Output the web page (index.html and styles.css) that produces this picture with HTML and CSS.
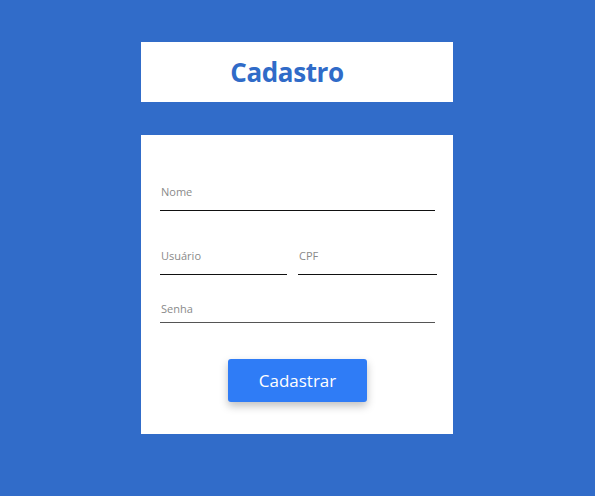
FILE: index.html
```html
<!DOCTYPE html>
<html lang="pt-BR">
<head>
    <meta charset="UTF-8">
    <meta name="viewport" content="width=device-width, initial-scale=1.0">
    <title>Cadastro</title>
    <link rel="stylesheet" href="styles.css">
</head>
<body>
    <div class="wrap">
        <div class="header">
            <h1>Cadastro</h1>
        </div>

        <form class="card">
            <div class="field field-nome">
                <label for="nome">Nome</label>
                <input type="text" id="nome">
            </div>
            <div class="row">
                <div class="field field-usuario">
                    <label for="usuario">Usuário</label>
                    <input type="text" id="usuario">
                </div>
                <div class="field field-cpf">
                    <label for="cpf">CPF</label>
                    <input type="text" id="cpf">
                </div>
            </div>
            <div class="field field-senha">
                <label for="senha">Senha</label>
                <input type="password" id="senha">
            </div>
            <div class="actions">
                <button type="button">Cadastrar</button>
            </div>
        </form>
    </div>
</body>
</html>
```

FILE: styles.css
```css
body {
    margin: 0;
    background-color: #316cc9;
    font-family: "Open Sans", "Noto Sans", sans-serif;
}
.wrap {
    width: 312px;
    margin: 42px 0 0 141px;
    display: flex;
    flex-direction: column;
    gap: 33px;
}
.header {
    height: 60px;
    background: #fff;
    display: flex;
    align-items: center;
    justify-content: center;
    padding-right: 20px;
}
.header h1 {
    margin: 0;
    font-size: 26px;
    font-weight: 700;
    color: #306bc8;
    letter-spacing: -0.4px;
}
.card {
    height: 299px;
    box-sizing: border-box;
    background: #fff;
    padding: 49px 16px 0 19px;
    display: flex;
    flex-direction: column;
}
.field {
    display: flex;
    flex-direction: column;
}
.field label {
    font-size: 11px;
    line-height: 16px;
    color: #8a8a8a;
    padding-left: 1px;
}
.field input {
    border: none;
    border-bottom: 1px solid #111;
    outline: none;
    height: 10px;
    padding: 0;
    font: inherit;
}
.field-nome {
    width: 275px;
}
.row {
    display: flex;
    gap: 11px;
    margin-top: 37px;
}
.field-usuario {
    width: 127px;
}
.field-cpf {
    width: 139px;
}
.field-senha {
    width: 275px;
    margin-top: 26px;
}
.field-senha input {
    height: 5px;
    border-bottom-color: #555;
}
.actions {
    display: flex;
    justify-content: center;
    margin-top: 36px;
    padding-right: 2px;
}
.actions button {
    width: 139px;
    height: 43px;
    background-color: #2f7cf6;
    color: #fff;
    border: none;
    border-radius: 3px;
    font-family: inherit;
    font-size: 17px;
    box-shadow: 0 4px 8px rgba(0, 0, 0, 0.25);
    cursor: pointer;
}
```
